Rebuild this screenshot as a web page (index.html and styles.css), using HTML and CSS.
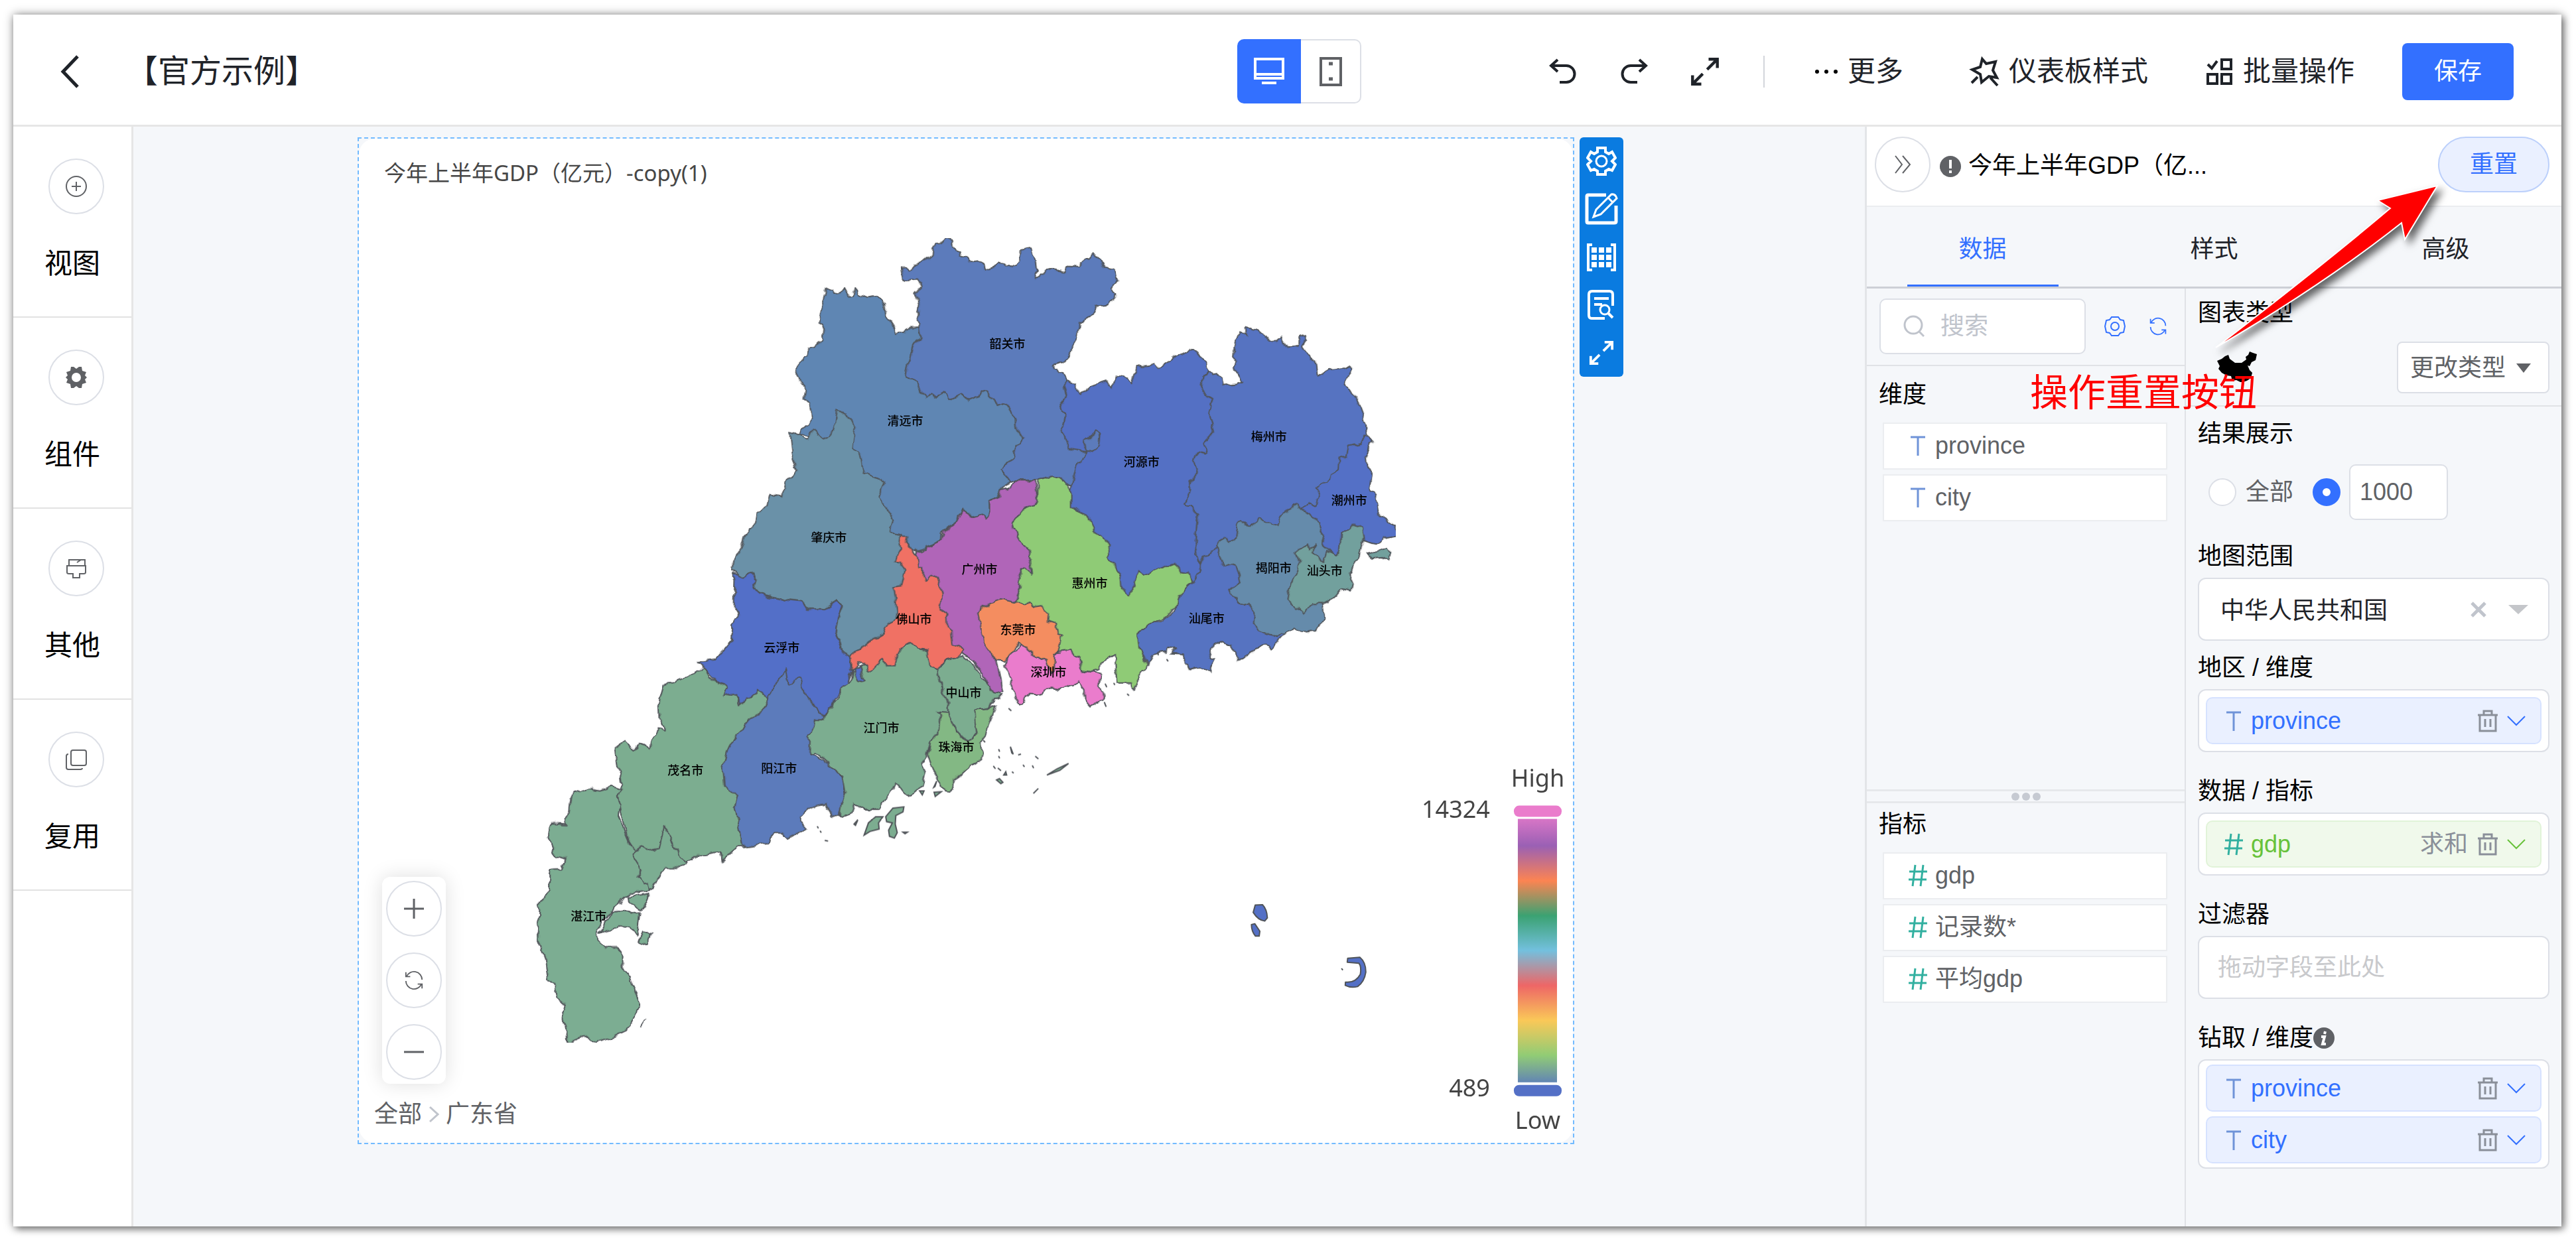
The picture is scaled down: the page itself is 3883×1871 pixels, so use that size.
FILE: index.html
```html
<!DOCTYPE html>
<html lang="zh-CN">
<head>
<meta charset="utf-8">
<title>官方示例 - 仪表板</title>
<link rel="stylesheet" href="styles.css">
</head>
<body>
<svg class="defs" aria-hidden="true">
  <symbol id="i-text" viewBox="0 0 24 32"><path d="M1 3H23M12 3V31" fill="none" stroke="#6f93d8" stroke-width="3"/></symbol>
  <symbol id="i-hash" viewBox="0 0 30 34"><path d="M11 1L7 33M23 1L19 33M2 11H29M1 23H28" fill="none" stroke="#32b0a0" stroke-width="3"/></symbol>
  <symbol id="i-trash" viewBox="0 0 32 34"><path d="M1 8H31M10 7V2H22V7M4 8V32H28V8M12 14V26M20 14V26" fill="none" stroke="currentColor" stroke-width="3"/></symbol>
  <symbol id="i-down" viewBox="0 0 28 18"><path d="M1 2L14 15L27 2" fill="none" stroke="currentColor" stroke-width="2"/></symbol>
  <symbol id="i-cycle" viewBox="0 0 32 32"><path d="M4 10A13 13 0 0 1 29 15M3 3V10H10M28 22A13 13 0 0 1 3 17M29 29V22H22" fill="none" stroke="currentColor" stroke-width="2"/></symbol>
  <symbol id="i-expand" viewBox="0 0 40 40"><path d="M25 3H37V15M36 4L23 17M15 37H3V25M4 36L17 23" fill="none" stroke="currentColor" stroke-width="4"/></symbol>
</svg>

<div class="window">
  <header class="topbar">
    <div class="topbar-left">
      <button class="back" aria-label="返回"><svg width="32" height="52" viewBox="0 0 32 52"><path d="M27 3L5 26L27 49" fill="none" stroke="#1f2329" stroke-width="5"/></svg></button>
      <h1>【官方示例】</h1>
    </div>
    <div class="device">
      <button class="device-btn active" aria-label="电脑"><svg width="46" height="44" viewBox="0 0 46 44"><path d="M2 3H44V32H2ZM2 26H44" fill="none" stroke="#fff" stroke-width="4"/><path d="M12 39H34" stroke="#fff" stroke-width="4"/></svg></button>
      <button class="device-btn" aria-label="手机"><svg width="36" height="44" viewBox="0 0 36 44"><rect x="3" y="2" width="30" height="40" fill="none" stroke="#5f6165" stroke-width="4"/><path d="M15 10H21M15 33H21" stroke="#5f6165" stroke-width="5"/></svg></button>
    </div>
    <div class="topbar-right">
      <div class="history">
        <button aria-label="撤销"><svg width="44" height="44" viewBox="0 0 44 44"><path d="M14 4L4 13L14 22M5 13H27A12 12 0 0 1 27 38H17" fill="none" stroke="#1f2329" stroke-width="4"/></svg></button>
        <button aria-label="重做"><svg width="44" height="44" viewBox="0 0 44 44"><path d="M30 4L40 13L30 22M39 13H17A12 12 0 0 0 17 38H27" fill="none" stroke="#1f2329" stroke-width="4"/></svg></button>
        <button aria-label="全屏"><svg width="44" height="44"><use href="#i-expand"/></svg></button>
      </div>
      <span class="divider"></span>
      <button class="tool more"><svg width="36" height="8"><circle cx="4" cy="4" r="3"/><circle cx="18" cy="4" r="3"/><circle cx="32" cy="4" r="3"/></svg>更多</button>
      <button class="tool theme"><svg width="46" height="46" viewBox="0 0 46 46"><path d="M20 4L26 11L40 8L36 21L42 32L30 30L19 39L17 27L5 20L17 16ZM32 32L43 44M4 40L13 31" fill="none" stroke="#1f2329" stroke-width="4"/></svg>仪表板样式</button>
      <button class="tool batch"><svg width="42" height="42" viewBox="0 0 42 42"><path d="M3 10L9 16L17 5M24 3H38V17H24ZM3 25H17V39H3ZM24 25H38V39H24Z" fill="none" stroke="#1f2329" stroke-width="4"/></svg>批量操作</button>
      <button class="save">保存</button>
    </div>
  </header>

  <div class="workspace">
    <nav class="rail">
      <button class="rail-item"><span class="ring"><svg width="34" height="34" viewBox="0 0 34 34"><circle cx="17" cy="17" r="15" fill="none" stroke="#606266" stroke-width="2"/><path d="M10 17H24M17 10V24" stroke="#606266" stroke-width="2"/></svg></span>视图</button>
      <button class="rail-item"><span class="ring"><svg width="34" height="34" viewBox="0 0 34 34"><path fill="#5f6165" fill-rule="evenodd" d="M9 1H13L17 4L21 1H25L26 7L32 9L30 14L33 17L30 20L32 25L26 27L25 33H21L17 30L13 33H9L8 27L2 25L4 20L1 17L4 14L2 9L8 7ZM17 10A7 7 0 1 0 17 24A7 7 0 1 0 17 10Z"/></svg></span>组件</button>
      <button class="rail-item"><span class="ring"><svg width="34" height="34" viewBox="0 0 34 34"><path d="M6 12V4H30V12M18 8L24 4M3 13H31V23Q31 25 28 25H22V31H12V25H6Q3 25 3 23Z" fill="none" stroke="#606266" stroke-width="2"/></svg></span>其他</button>
      <button class="rail-item"><span class="ring"><svg width="34" height="34" viewBox="0 0 34 34"><rect x="9" y="3" width="23" height="23" rx="3" fill="none" stroke="#606266" stroke-width="2"/><path d="M5 9Q2 9 2 12V29Q2 32 5 32H23Q26 32 26 30" fill="none" stroke="#606266" stroke-width="2"/></svg></span>复用</button>
    </nav>

    <main class="canvas">
      <section class="chart">
        <div class="sheet">
        <svg class="map" viewBox="542 209 1829 1513" role="img" aria-label="广东省 GDP 地图">
          <defs>
            <filter id="coast" x="0" y="0" width="1" height="1" color-interpolation-filters="sRGB">
              <feTurbulence type="fractalNoise" baseFrequency="0.07" numOctaves="2" seed="4"/>
              <feDisplacementMap in="SourceGraphic" scale="10" xChannelSelector="R" yChannelSelector="G"/>
            </filter>
            <linearGradient id="scale" gradientUnits="userSpaceOnUse" x1="0" y1="1222" x2="0" y2="1643">
              <stop offset="0" stop-color="#ea7ccc"/><stop offset="0.125" stop-color="#9a60b4"/><stop offset="0.25" stop-color="#fc8452"/><stop offset="0.375" stop-color="#3ba272"/><stop offset="0.5" stop-color="#73c0de"/><stop offset="0.625" stop-color="#ee6666"/><stop offset="0.75" stop-color="#fac858"/><stop offset="0.875" stop-color="#91cc75"/><stop offset="1" stop-color="#5470c6"/>
            </linearGradient>
          </defs>
          <g class="regions" filter="url(#coast)">
            <g transform="translate(1180 340) scale(.35714)">
              <path fill="#5f86b3" d="M67 875L110 835L124 800L115 755L90 730L97 680L75 655L58 620L68 575L105 550L120 515L172 483L176 432L152 405L165 340L183 267L210 268L220 286L245 280L265 265L282 296L295 294L305 268L318 290L370 306L400 298L434 332L440 380L466 420L472 456L512 450L530 436L575 434L583 470L555 510L543 565L530 575L520 642L550 646L607 726L627 706L650 724L690 703L712 733L755 712L785 735L826 718L835 700L862 704L910 758L935 748L960 770L980 815L982 855L1020 902L985 930L975 985L922 1025L957 1084L920 1120L910 1142L875 1158L878 1210L862 1240L840 1222L805 1228L760 1198L735 1250L672 1300L670 1330L570 1372L530 1380L440 1380L300 1250L150 1000L130 900Z"/>
              <path fill="#5c7bbb" d="M503 172L520 172L530 195L555 165L585 160L630 122L635 95L650 72L668 78L690 57L718 68L722 96L745 105L750 128L778 135L790 155L830 152L852 165L856 188L885 175L900 170L918 156L935 160L942 175L972 173L995 150L1000 106L1050 98L1055 120L1072 148L1078 195L1064 205L1073 222L1105 195L1130 187L1195 198L1207 172L1250 176L1272 140L1290 145L1313 122L1340 145L1360 175L1395 184L1412 235L1382 270L1405 285L1403 310L1370 335L1325 340L1305 378L1250 412L1246 460L1222 500L1216 545L1185 578L1140 590L1140 606L1185 620L1200 655L1187 675L1198 715L1170 760L1192 800L1180 860L1210 940L1270 943L1285 955L1240 1015L1232 1080L1220 1095L1190 1092L1175 1060L1140 1058L1075 1074L985 1076L957 1084L922 1025L975 985L985 930L1020 902L982 855L980 815L960 770L935 748L910 758L862 704L835 700L826 718L785 735L755 712L712 733L690 703L650 724L627 706L607 726L550 646L520 642L530 575L543 565L555 510L583 470L575 434L570 365L580 335L560 290L590 257L570 228L525 232L510 225Z"/>
            </g>
            <path fill="#5470c4" d="M1609 574L1619 576L1629 594L1648 581L1669 574L1677 586L1683 567L1701 570L1706 577L1714 554L1730 552L1740 546L1747 554L1777 534L1789 535L1798 526L1812 537L1823 560L1815 566L1812 591L1828 601L1823 625L1829 650L1815 668L1818 684L1805 680L1800 695L1805 713L1797 725L1787 760L1795 764L1806 776L1802 819L1808 850L1808 862L1798 880L1760 890L1702 905L1640 850L1610 760L1616 731L1623 702L1639 681L1612 676L1601 647L1606 626L1598 611L1608 595L1604 581Z"/>
            <path fill="#5c7bbb" d="M1638 679L1636 663L1652 651L1659 656L1657 674L1648 681Z"/>
            <path fill="#6a91a8" d="M1204 652L1191 655L1194 683L1202 710L1183 727L1180 748L1162 745L1158 762L1144 772L1137 792L1122 810L1117 828L1108 840L1105 860L1121 870L1133 862L1141 875L1137 887L1155 898L1182 904L1206 907L1220 918L1244 918L1262 906L1270 913L1263 930L1260 954L1267 967L1270 983L1284 990L1330 970L1385 940L1385 850L1366 815L1356 806L1344 802L1342 795L1347 785L1337 765L1326 747L1332 726L1326 719L1303 713L1296 681L1287 676L1291 644L1276 626L1263 618L1258 649L1241 663L1226 648L1219 663L1214 663Z"/>
            <g transform="translate(1680 460) scale(.33333 .40816)">
              <path fill="#5673c1" d="M430 245L445 258L460 255L492 268L498 298L545 292L577 285L540 232L555 218L535 190L545 125L565 98L600 115L597 82L670 100L700 132L735 130L755 115L785 155L830 148L840 120L858 112L868 130L850 150L870 185L912 208L922 263L970 240L1035 235L1060 225L1075 235L1045 288L1095 345L1120 400L1138 445L1140 485L1170 500L960 800L700 860L460 900L400 950L385 955L365 880L378 775L345 745L320 735L350 650L375 620L360 575L375 540L415 548L405 510L448 465L428 405L445 345L395 320L405 260Z"/>
              <path fill="#5470c6" d="M848 750L880 730L912 742L925 690L915 680L945 655L965 655L975 625L1018 605L1022 570L1050 560L1058 520L1115 508L1130 480L1170 502L1138 540L1145 590L1163 620L1152 680L1180 690L1198 770L1273 815L1270 850L1220 860L1175 882L1125 868L1080 860L1010 930L940 910Z"/>
              <path fill="#5673c1" d="M460 900L405 925L385 955L385 985L350 1030L290 1075L280 1125L220 1165L175 1168L102 1212L105 1255L155 1325L175 1290L240 1280L245 1265L275 1270L262 1285L312 1288L322 1325L345 1343L390 1335L437 1357L440 1330L455 1305L428 1300L445 1255L480 1242L530 1258L550 1285L553 1308L575 1305L630 1272L685 1252L710 1265L775 1210L700 1180L640 1000L500 930Z"/>
              <path fill="#658bab" d="M460 893L495 855L510 872L550 870L560 800L575 795L610 818L655 787L685 805L740 818L755 775L825 733L848 752L925 798L935 835L948 850L938 880L980 912L940 1000L943 1105L950 1155L915 1200L850 1208L815 1190L775 1210L755 1208L740 1225L700 1215L650 1200L630 1180L635 1130L605 1098L580 1105L515 1055L570 1018L550 955L495 965Z"/>
              <path fill="#72a09d" d="M822 918L840 892L868 882L885 905L905 888L898 912L945 945L960 908L1000 925L1020 910L1025 835L1070 832L1088 808L1120 822L1128 868L1110 925L1060 990L1080 1032L1072 1052L1030 1045L1000 1075L940 1105L895 1105L855 1140L785 1085L800 1020L825 980L838 950Z"/>
              <path fill="#72a09d" d="M1145 915L1190 908L1235 895L1248 915L1240 945L1210 932L1165 935Z"/>
            </g>
            <g transform="translate(780 840) scale(.44643 .48469)">
              <path fill="#536fc8" d="M727 48L765 62L790 45L808 72L800 98L840 120L900 132L955 138L985 160L1040 160L1080 137L1097 150L1083 185L1075 235L1090 262L1098 295L1122 305L1133 352L1110 405L1090 410L1085 430L1070 440L1060 475L1040 492L960 520L830 450L800 435L770 440L758 465L745 430L695 432L700 400L650 370L632 340L612 325L670 318L725 258L728 210L748 178L733 155L735 70Z"/>
              <path fill="#7cad90" d="M632 340L645 375L705 402L695 430L742 425L752 465L775 435L795 438L815 410L850 440L890 450L850 700L770 900L745 900L690 943L687 915L640 922L610 925L575 945L500 920L400 912L378 880L350 800L340 740L355 700L340 650L332 592L365 572L395 600L418 576L450 595L460 555L480 530L503 535L480 495L478 455L495 400L545 382L600 362Z"/>
              <path fill="#5c7bbb" d="M907 350L915 395L955 375L970 425L1020 475L1040 495L1010 560L990 605L1055 640L1100 685L1108 745L1088 808L1065 805L1042 768L985 780L955 805L955 825L980 840L915 875L895 855L865 855L848 890L800 895L762 900L748 830L735 775L745 740L700 710L695 650L718 580L758 540L780 505L830 475L865 405Z"/>
              <path fill="#7cad92" d="M180 745L195 728L215 732L250 718L280 722L320 712L352 722L337 745L348 770L342 805L362 850L378 885L405 912L425 900L445 912L480 905L497 838L515 865L525 895L550 930L577 945L550 965L500 965L470 1005L452 1035L380 1045L325 1090L290 1130L272 1160L275 1190L300 1212L340 1212L357 1240L357 1285L380 1290L395 1340L413 1390L408 1415L370 1470L315 1495L265 1508L235 1488L170 1510L168 1465L152 1425L163 1390L135 1370L125 1320L105 1315L95 1250L70 1190L75 1080L112 1035L112 970L150 968L165 935L122 925L107 860L117 828L165 830L175 790Z"/>
              <path fill="none" d="M405 912L390 925L420 970L405 995L430 1012L447 1010L452 1035"/>
              <path fill="#7cad92" d="M375 1055L447 1045L422 1098L400 1078L378 1068ZM280 1168L320 1100L360 1098L385 1110L418 1105L405 1178L385 1150L345 1148ZM425 1162L452 1172L440 1205L412 1195ZM418 1455L432 1435Z"/>
            </g>
            <g transform="translate(1160 700) scale(.43367 .36990)">
              <path fill="#7cad90" d="M435 700L490 725L520 755L550 765L585 835L590 880L620 965L622 1010L596 1020L590 1100L560 1130L548 1185L530 1215L540 1255L530 1310L490 1352L470 1340L445 1300L420 1330L380 1405L330 1405L295 1378L285 1420L247 1437L252 1380L265 1340L255 1270L210 1235L210 1215L165 1175L140 1180L142 1125L128 1100L150 1085L158 1040L185 1040L215 1000L225 965L245 945L248 910L285 880L290 840L330 810L400 790Z"/>
              <path fill="#536fc8" d="M295 830L315 820L328 880L308 890L300 865Z"/>
              <path fill="#b065b8" d="M512 352L530 350L580 320L600 310L605 278L650 235L672 185L710 215L738 205L755 222L768 195L768 145L800 128L805 105L830 98L860 65L925 65L933 155L885 180L843 240L870 310L905 345L912 450L890 425L872 425L875 500L855 555L780 600L742 700L790 800L812 930L780 935L740 850L710 800L670 770L590 780L530 600L490 440Z"/>
              <path fill="#7cad90" d="M585 835L610 800L670 780L715 820L740 870L765 895L780 932L812 940L785 955L760 990L750 998L715 1000L715 1050L722 1095L690 1130L650 1080L622 1012L620 965L590 880Z"/>
              <path fill="#83b884" d="M596 1020L585 1008L622 1012L650 1085L690 1130L722 1095L715 1050L712 1000L750 998L775 980L785 985L755 1100L735 1130L740 1205L705 1225L650 1275L625 1332L600 1310L570 1240L552 1190L560 1130L590 1100Z"/>
              <path fill="#f07164" d="M450 292L482 292L478 320L500 362L515 375L520 420L532 420L535 460L545 478L565 448L585 460L600 520L592 590L618 610L620 660L635 680L640 735L672 752L655 788L610 798L585 835L560 820L548 760L515 755L490 725L460 745L440 790L435 820L410 820L395 790L345 850L340 820L320 805L285 835L282 775L320 750L345 725L395 690L415 650L440 635L445 600L435 510L430 500L455 495L470 430L455 400L437 398L460 340Z"/>
              <path fill="#8fcb76" d="M933 65L985 48L1010 50L1020 70L1047 95L1047 170L1065 185L1105 207L1130 270L1165 300L1187 330L1170 380L1190 395L1220 450L1225 500L1250 535L1270 500L1280 430L1300 450L1410 400L1430 440L1455 445L1470 480L1425 540L1415 580L1370 630L1340 635L1280 690L1285 750L1315 815L1280 865L1280 900L1268 918L1262 890L1208 890L1200 772L1160 800L1150 835L1120 845L1090 840L1000 800L900 650L855 555L875 500L872 425L890 425L912 450L905 345L870 310L843 240L885 180L933 155Z"/>
              <path fill="#ea7ccc" d="M870 735L895 745L930 785L965 800L990 835L990 770L1048 758L1060 780L1080 790L1085 840L1150 850L1145 900L1162 930L1155 960L1115 985L1100 965L1098 920L1075 885L1010 915L980 910L935 940L900 938L880 975L862 970L850 915L820 820L835 775Z"/>
              <path fill="#f48d60" d="M725 600L745 578L805 550L850 562L900 565L920 580L945 575L970 605L968 640L1000 650L1005 690L1015 695L1005 765L992 770L990 845L980 850L965 800L930 785L890 745L868 728L850 745L835 775L818 802L790 800L750 735L735 680Z"/>
            </g>
          </g>
          <g class="islets" transform="translate(1160 700) scale(.43367 .36990)">
            <path fill="#7cad90" d="M330 1510L345 1460L370 1435L395 1435L380 1460L382 1485L350 1495ZM405 1435L430 1400L468 1395L465 1415L440 1430L438 1465L445 1500L435 1522L418 1515L415 1490L428 1460L408 1455ZM295 1465L308 1448L300 1470ZM465 1498L480 1498L472 1504ZM523 1330L538 1330L532 1346ZM572 1315L582 1290L576 1312ZM573 1335L598 1333L577 1352ZM965 1265L1000 1240L1040 1218L1010 1246ZM918 1340L935 1320ZM790 1285L800 1280L812 1295L805 1300ZM815 1265L822 1252L825 1265ZM838 1150L848 1180L843 1175ZM865 1183L875 1180ZM798 1190L800 1195M798 1162L800 1168M780 1230L785 1238M796 1238L804 1246M883 1225L886 1230M915 1228L918 1235M926 1190L934 1198M845 1253L848 1256M745 1125L749 1130M833 995L840 1002M1165 970L1170 985M1168 895L1172 905M1245 936L1249 940M1198 892L1200 896M1382 795L1385 800M1350 768L1352 775M168 1476L170 1480M178 1494L180 1498M195 1532L203 1534"/>
          </g>
          <g class="regions" transform="translate(1860 1340) scale(.33333)">
            <path fill="#5470c6" d="M97 72L130 70Q150 90 152 130L140 144Q110 140 88 105ZM80 160L95 156L118 190L115 212L98 212Q80 190 80 160ZM515 312L570 308Q597 330 597 375Q590 420 560 440Q530 448 504 435L505 420Q550 425 572 385Q578 350 566 335L513 330ZM487 358L493 366"/>
          </g>
          <g class="cities">
            <text x="1519" y="525">韶关市</text><text x="1365" y="641">清远市</text><text x="1250" y="817">肇庆市</text><text x="1477" y="865">广州市</text><text x="1643" y="886">惠州市</text><text x="1721" y="703">河源市</text><text x="1913" y="665">梅州市</text><text x="2034" y="761">潮州市</text><text x="1920" y="863">揭阳市</text><text x="1997" y="867">汕头市</text><text x="1819" y="939">汕尾市</text><text x="1378" y="940">佛山市</text><text x="1535" y="956">东莞市</text><text x="1581" y="1020">深圳市</text><text x="1453" y="1051">中山市</text><text x="1329" y="1104">江门市</text><text x="1442" y="1133">珠海市</text><text x="1179" y="983">云浮市</text><text x="1175" y="1164">阳江市</text><text x="1034" y="1167">茂名市</text><text x="888" y="1387">湛江市</text>
          </g>
          <g class="legend">
            <text x="2318" y="1185" text-anchor="middle">High</text>
            <text x="2246" y="1232" text-anchor="end">14324</text>
            <text x="2246" y="1652" text-anchor="end">489</text>
            <text x="2318" y="1701" text-anchor="middle">Low</text>
            <rect x="2288" y="1234" width="59" height="397" fill="url(#scale)"/>
            <rect x="2282" y="1214" width="72" height="17" rx="8" fill="#ea7ccc"/>
            <rect x="2282" y="1635" width="72" height="17" rx="8" fill="#5470c6"/>
          </g>
        </svg>
        <h2 class="chart-title">今年上半年GDP（亿元）-copy(1)</h2>
        <div class="zoom">
          <button class="ring" aria-label="放大"><svg width="30" height="30"><path d="M0 15H30M15 0V30" stroke="#606266" stroke-width="3"/></svg></button>
          <button class="ring" aria-label="刷新"><svg width="30" height="30"><use href="#i-cycle"/></svg></button>
          <button class="ring" aria-label="缩小"><svg width="30" height="30"><path d="M0 15H30" stroke="#606266" stroke-width="3"/></svg></button>
        </div>
        <div class="crumbs"><a href="#all">全部</a><svg width="16" height="28" viewBox="0 0 16 28"><path d="M2 3L14 14L2 25" fill="none" stroke="#c0c4cc" stroke-width="3"/></svg><a href="#gd">广东省</a></div>
        </div>
      </section>
      <div class="chart-tools">
        <button aria-label="设置"><svg width="46" height="46" viewBox="0 0 46 46"><path d="M17 3H29V9L34 12L39 9L44 18L39 23L44 28L39 37L34 35L29 38V43H17V38L12 35L7 37L2 28L7 23L2 18L7 9L12 12L17 9Z" fill="none" stroke="#fff" stroke-width="4"/><circle cx="23" cy="23" r="8" fill="none" stroke="#fff" stroke-width="3"/></svg></button>
        <button aria-label="编辑"><svg width="50" height="50" viewBox="0 0 50 50"><path d="M32 4H5Q3 4 3 6V44Q3 46 5 46H44Q47 46 47 44V20" fill="none" stroke="#fff" stroke-width="5"/><path d="M40 3Q46 2 48 9L24 33L13 37L17 26ZM35 8L42 15" fill="none" stroke="#fff" stroke-width="3"/></svg></button>
        <button aria-label="明细"><svg width="44" height="42" viewBox="0 0 44 42"><path d="M8 2H2V40H8M36 2H42V40H36" fill="none" stroke="#fff" stroke-width="4"/><path d="M7 10H37M7 21H37M7 32H37" stroke="#fff" stroke-width="8" stroke-dasharray="8 3"/></svg></button>
        <button aria-label="查看"><svg width="42" height="46" viewBox="0 0 42 46"><path d="M26 43H6Q2 43 2 38V7Q2 2 7 2H33Q38 2 38 7V24M10 13H32M10 22H22" fill="none" stroke="#fff" stroke-width="4"/><circle cx="26" cy="30" r="7" fill="none" stroke="#fff" stroke-width="3"/><path d="M31 35L38 42" stroke="#fff" stroke-width="4"/></svg></button>
        <button aria-label="放大"><svg width="38" height="38"><use href="#i-expand"/></svg></button>
      </div>
    </main>

    <aside class="panel">
      <div class="panel-head">
        <button class="ring" aria-label="收起"><svg width="26" height="28" viewBox="0 0 26 28"><path d="M2 1L12 14L2 27M13 1L24 14L13 27" fill="none" stroke="#606266" stroke-width="2"/></svg></button>
        <svg class="warn" width="32" height="32" viewBox="0 0 32 32"><circle cx="16" cy="16" r="16" fill="#606266"/><path d="M16 6V19M16 22V26" stroke="#fff" stroke-width="4"/></svg>
        <span class="view-name">今年上半年GDP（亿...</span>
        <button class="reset">重置</button>
      </div>
      <div class="tabs" role="tablist">
        <button role="tab" class="tab active">数据</button>
        <button role="tab" class="tab">样式</button>
        <button role="tab" class="tab">高级</button>
      </div>
      <div class="panel-body">
        <div class="fields">
          <div class="search-row">
            <label class="search"><svg width="32" height="34" viewBox="0 0 32 34"><circle cx="15" cy="15" r="13" fill="none" stroke="#c0c4cc" stroke-width="3"/><path d="M24 25L31 32" stroke="#c0c4cc" stroke-width="3"/></svg><input type="text" placeholder="搜索" aria-label="搜索"></label>
            <button aria-label="字段设置"><svg width="32" height="32" viewBox="0 0 32 32"><path d="M11 2H21L24 6L29 7L31 16L29 25L24 26L21 30H11L8 26L3 25L1 16L3 7L8 6Z" fill="none" stroke="#3370ff" stroke-width="2"/><circle cx="16" cy="16" r="6" fill="none" stroke="#3370ff" stroke-width="2"/></svg></button>
            <button aria-label="刷新字段"><svg width="28" height="28"><use href="#i-cycle"/></svg></button>
          </div>
          <section class="dims">
            <h3>维度</h3>
            <ul class="field-list">
              <li><svg width="24" height="32"><use href="#i-text"/></svg>province</li>
              <li><svg width="24" height="32"><use href="#i-text"/></svg>city</li>
            </ul>
          </section>
          <div class="splitter"><i></i><i></i><i></i></div>
          <section class="metrics">
            <h3>指标</h3>
            <ul class="field-list">
              <li><svg width="28" height="34"><use href="#i-hash"/></svg>gdp</li>
              <li><svg width="28" height="34"><use href="#i-hash"/></svg>记录数*</li>
              <li><svg width="28" height="34"><use href="#i-hash"/></svg>平均gdp</li>
            </ul>
          </section>
        </div>

        <form class="settings">
          <section class="chart-type">
            <h3>图表类型</h3>
            <div class="type-row">
              <svg width="62" height="48" viewBox="0 0 62 48"><path d="M1 14L8 11L13 7L18 5L20 11L28 17L38 17L45 12L44 8L48 5L50 0L55 2L61 4L59 13L53 16L50 22L47 21L50 28L54 32L52 40L46 44L40 46L36 46L30 43L24 44L22 37L15 36L8 32L3 26L5 22Z"/><path d="M52 43L54 40V46Z"/></svg>
              <button type="button" class="change">更改类型<svg width="22" height="14"><path d="M0 0H22L11 14Z" fill="#606266"/></svg></button>
            </div>
          </section>
          <section class="options">
            <h3>结果展示</h3>
            <div class="result-row">
              <label><input type="radio" name="limit">全部</label>
              <input type="radio" name="limit" checked aria-label="限制条数">
              <input class="limit" type="text" value="1000" aria-label="条数">
            </div>
            <h3><label for="range">地图范围</label></h3>
            <div class="box range">
              <select id="range"><option>中华人民共和国</option></select>
              <svg width="26" height="26" viewBox="0 0 26 26"><path d="M3 3L23 23M23 3L3 23" stroke="#c0c4cc" stroke-width="5"/></svg>
              <svg width="30" height="14"><path d="M0 0H30L15 14Z" fill="#c4c6ca"/></svg>
            </div>
            <h3 class="after-range">地区 / 维度</h3>
            <div class="box"><div class="tag"><svg width="24" height="32"><use href="#i-text"/></svg><span>province</span><svg class="del" width="32" height="34"><use href="#i-trash"/></svg><svg width="28" height="18"><use href="#i-down"/></svg></div></div>
            <h3>数据 / 指标</h3>
            <div class="box"><div class="tag green"><svg width="28" height="34"><use href="#i-hash"/></svg><span>gdp</span><em>求和</em><svg class="del" width="32" height="34"><use href="#i-trash"/></svg><svg width="28" height="18"><use href="#i-down"/></svg></div></div>
            <h3><label for="filter">过滤器</label></h3>
            <input id="filter" class="box drop" type="text" placeholder="拖动字段至此处">
            <h3>钻取 / 维度<svg width="32" height="32" viewBox="0 0 32 32"><circle cx="16" cy="16" r="16" fill="#5f6165"/><path d="M18 6L17 10M12 14H17L14 25H19" fill="none" stroke="#fff" stroke-width="4"/></svg></h3>
            <div class="box multi">
              <div class="tag"><svg width="24" height="32"><use href="#i-text"/></svg><span>province</span><svg class="del" width="32" height="34"><use href="#i-trash"/></svg><svg width="28" height="18"><use href="#i-down"/></svg></div>
              <div class="tag"><svg width="24" height="32"><use href="#i-text"/></svg><span>city</span><svg class="del" width="32" height="34"><use href="#i-trash"/></svg><svg width="28" height="18"><use href="#i-down"/></svg></div>
            </div>
          </section>
        </form>
      </div>
      <svg class="arrow" width="360" height="270" viewBox="3330 270 360 270" aria-hidden="true"><path d="M3674 281L3584 303L3603 315Q3500 402 3340 525Q3500 432 3620 337L3625 362Z" fill="#f00" stroke="#fff" stroke-width="2"/></svg>
      <p class="note">操作重置按钮</p>
    </aside>
  </div>
</div>
</body>
</html>
```

FILE: styles.css
```css
* { box-sizing: border-box; margin: 0; padding: 0; }
body {
  padding: 22px 22px 22px 20px;
  background: #fff;
  color: #1f2329;
  font: 36px/48px "Liberation Sans", "Noto Sans CJK SC", sans-serif;
}
button { border: 0; background: none; color: inherit; font: inherit; cursor: pointer; }
input, select { font: inherit; color: inherit; }
svg { display: block; flex: none; }
a { color: inherit; text-decoration: none; }
ul { list-style: none; }
h1, h2, h3 { font-weight: 400; }
.defs { position: absolute; width: 0; height: 0; }

.window {
  display: flex;
  flex-direction: column;
  min-height: calc(100vh - 44px);
  background: #fff;
  box-shadow: 0 0 14px rgba(0, 0, 0, .4), 4px 4px 10px rgba(0, 0, 0, .4);
}

/* top bar */
.topbar {
  display: grid;
  grid-template-columns: 1fr auto 1fr;
  align-items: center;
  height: 169px;
  padding: 5px 72px 0 70px;
  border-bottom: 3px solid #e6e6e6;
}
.topbar-left { display: flex; align-items: center; }
.topbar-left h1 { margin-left: 68px; font-size: 48px; line-height: 64px; }
.device { display: flex; margin-left: 38px; }
.device-btn {
  display: grid;
  place-items: center;
  width: 91px;
  height: 97px;
  border: 2px solid #dcdfe6;
  border-left: 0;
  border-radius: 0 10px 10px 0;
}
.device-btn.active { width: 96px; background: #3370ff; border: 0; border-radius: 10px 0 0 10px; }
.topbar-right { display: flex; align-items: center; justify-content: flex-end; font-size: 42px; line-height: 56px; }
.history { display: flex; gap: 63px; }
.divider { width: 2px; height: 48px; margin: 0 75px 0 66px; background: #d3d5db; }
.tool { display: flex; align-items: center; gap: 14px; }
.theme { margin-left: 99px; }
.batch { margin-left: 87px; }
.save {
  width: 168px;
  height: 86px;
  margin-left: 72px;
  border-radius: 8px;
  background: #3370ff;
  color: #fff;
  font-size: 36px;
}

.workspace { display: flex; flex: 1; }

/* left rail */
.rail { flex: none; width: 181px; border-right: 3px solid #e6e6e6; }
.rail-item {
  display: flex;
  flex-direction: column;
  align-items: center;
  gap: 47px;
  width: 100%;
  height: 288px;
  padding-top: 48px;
  border-bottom: 2px solid #e2e2e2;
  color: #000;
  font-size: 42px;
  line-height: 56px;
}
.rail-item .ring { margin-left: 12px; }
.ring {
  display: grid;
  flex: none;
  place-items: center;
  width: 84px;
  height: 84px;
  border: 2px solid #dcdfe6;
  border-radius: 50%;
  background: #fff;
  color: #606266;
}

/* canvas */
.canvas {
  display: flex;
  flex: 1;
  align-items: flex-start;
  gap: 8px;
  min-width: 0;
  padding: 16px 364px 0 338px;
  background: #f5f7fa;
}
.chart { flex: 1; border: 2px dashed #73bbff; }
.sheet {
  display: flex;
  position: relative;
  flex-direction: column;
  align-items: flex-start;
  aspect-ratio: 1829 / 1513;
  border-radius: 24px;
  background: #fff;
}
.map { position: absolute; inset: 0; width: 100%; height: 100%; }
.chart-title { z-index: 1; margin: 28px 38px auto; color: #464646; font: 33px/48px "Noto Sans", "Noto Sans CJK SC", sans-serif; }
.regions path { stroke: #505459; stroke-width: 2; stroke-linejoin: round; vector-effect: non-scaling-stroke; }
.islets path { stroke: #505459; stroke-width: 2; stroke-linecap: round; vector-effect: non-scaling-stroke; }
.cities text { font: 500 18px "Noto Sans CJK SC", sans-serif; text-anchor: middle; }
.legend text { fill: #444; font: 36px "Noto Sans", sans-serif; }
.zoom {
  display: flex;
  z-index: 1;
  flex-direction: column;
  gap: 24px;
  margin-left: 35px;
  padding: 6px;
  border-radius: 12px;
  background: #fff;
  box-shadow: 0 0 30px rgba(0, 0, 0, .13);
}
.crumbs { display: flex; z-index: 1; align-items: center; gap: 10px; margin: 22px 0 19px 23px; color: #606266; }
.chart-tools {
  display: flex;
  flex-direction: column;
  width: 66px;
  height: 361px;
  border-radius: 6px;
  background: #0a7be0;
  color: #fff;
}
.chart-tools button { display: grid; flex: 1; place-items: center; }

/* right panel */
.panel { position: relative; flex: none; width: 1050px; border-left: 3px solid #e3e5e8; background: #f5f7fa; }
.panel-head {
  display: flex;
  align-items: center;
  height: 121px;
  padding: 0 18px 6px 12px;
  border-bottom: 2px solid #ebedf0;
  background: #fff;
}
.warn { margin: 6px 11px 0 14px; }
.view-name { flex: 1; padding-top: 4px; color: #000; }
.reset {
  width: 168px;
  height: 84px;
  border: 2px solid #bcd0fb;
  border-radius: 42px;
  background: #eaf0ff;
  color: #3370ff;
}
.tabs { display: flex; height: 123px; border-bottom: 3px solid #cdd0d6; }
.tab { display: flex; flex: 1; flex-direction: column; align-items: center; padding-top: 40px; color: #1f2329; }
.tab.active { color: #3370ff; }
.tab.active::after { width: 228px; height: 6px; margin-top: 29px; background: #3370ff; content: ""; }
.panel-body { display: flex; }
.fields {
  display: grid;
  flex: none;
  grid-template-rows: 117px 638px 18px 1fr;
  width: 481px;
  min-height: 1414px;
  border-right: 2px solid #e0e2e6;
}
h3 { color: #000; font-size: 36px; line-height: 52px; }
.search-row { display: flex; align-items: center; padding: 0 26px 2px 19px; border-bottom: 2px solid #e0e2e6; color: #3370ff; }
.search {
  display: flex;
  align-items: center;
  gap: 24px;
  width: 311px;
  height: 84px;
  margin-right: 28px;
  padding-left: 34px;
  border: 2px solid #dcdfe6;
  border-radius: 10px;
  background: #fff;
}
.search input { width: 180px; border: 0; background: none; }
::placeholder { color: #c0c4cc; opacity: 1; }
.search + button { margin-right: 35px; }
.dims { padding: 17px 26px 0 18px; }
.metrics { padding: 6px 26px 0 18px; border-top: 3px solid #e6e8eb; }
.field-list { display: grid; gap: 7px; margin: 16px 0 0 6px; }
.field-list li {
  display: flex;
  align-items: center;
  height: 71px;
  padding: 0 0 2px 36px;
  border: 2px solid #ebedf0;
  background: #fff;
  color: #606266;
}
.field-list svg { width: 30px; margin-right: 11px; }
.splitter { display: flex; align-items: center; justify-content: center; gap: 4px; border-top: 3px solid #e6e8eb; }
.splitter i { width: 12px; height: 12px; border-radius: 50%; background: #c6cad2; }

.settings { flex: 1; min-width: 0; }
.chart-type { padding: 11px 18px 18px; border-bottom: 2px solid #e0e2e6; }
.type-row { display: flex; align-items: center; justify-content: space-between; margin-top: 17px; padding-left: 28px; }
.change {
  display: flex;
  align-items: center;
  gap: 16px;
  height: 78px;
  padding: 2px 26px 0 18px;
  border: 2px solid #dcdfe6;
  border-radius: 8px;
  background: #fff;
  color: #606266;
}
.options { padding: 15px 18px 0; }
.options h3 { display: flex; align-items: center; margin: 33px 0 6px; }
.options h3:first-child { margin: 0; }
.result-row { display: flex; align-items: center; margin: 20px 0 -4px; padding-left: 16px; color: #606266; }
.result-row label { display: flex; align-items: center; gap: 14px; margin-right: 29px; }
.result-row input[type="radio"] { appearance: none; width: 42px; height: 42px; border: 2px solid #dcdfe6; border-radius: 50%; background: #fff; }
.result-row input[type="radio"]:checked { border: 15px solid #3370ff; }
.limit { width: 149px; height: 84px; margin-left: 13px; padding-left: 14px; border: 2px solid #dcdfe6; border-radius: 10px; background: #fff; }
.box { display: block; width: 100%; padding: 10px; border: 2px solid #dcdfe6; border-radius: 12px; background: #fff; }
.multi { padding: 6px 10px; }
.range { display: flex; align-items: center; height: 95px; padding: 0 30px 0 32px; }
.range select { flex: 1; height: 76px; padding-top: 4px; appearance: none; border: 0; background: none; }
.range svg + svg { margin-left: 32px; }
.options .after-range { margin-top: 15px; }
.drop { height: 95px; padding: 0 28px; }
.drop::placeholder { color: #c8c9cc; }
.tag {
  display: flex;
  align-items: center;
  height: 71px;
  padding: 0 22px 0 25px;
  border: 2px solid #d6e2ff;
  border-radius: 10px;
  background: #eaf0ff;
  color: #3370ff;
}
.tag + .tag { margin-top: 7px; }
.tag > svg:first-child { width: 30px; margin-right: 11px; }
.tag span { flex: 1; }
.tag em { margin-right: 14px; color: #8a8f99; font-style: normal; }
.tag .del { margin-right: 13px; color: #8a8f99; }
.tag.green { border-color: #e1f3d8; background: #f0f9eb; color: #67c23a; }

/* callout laid over the panel */
.arrow { position: absolute; left: 516px; top: 78px; filter: drop-shadow(7px 7px 6px rgba(0, 0, 0, .6)); }
.note { position: absolute; left: 246px; top: 364px; color: #f00; font: 57px/64px "Noto Sans CJK SC", sans-serif; }
```
